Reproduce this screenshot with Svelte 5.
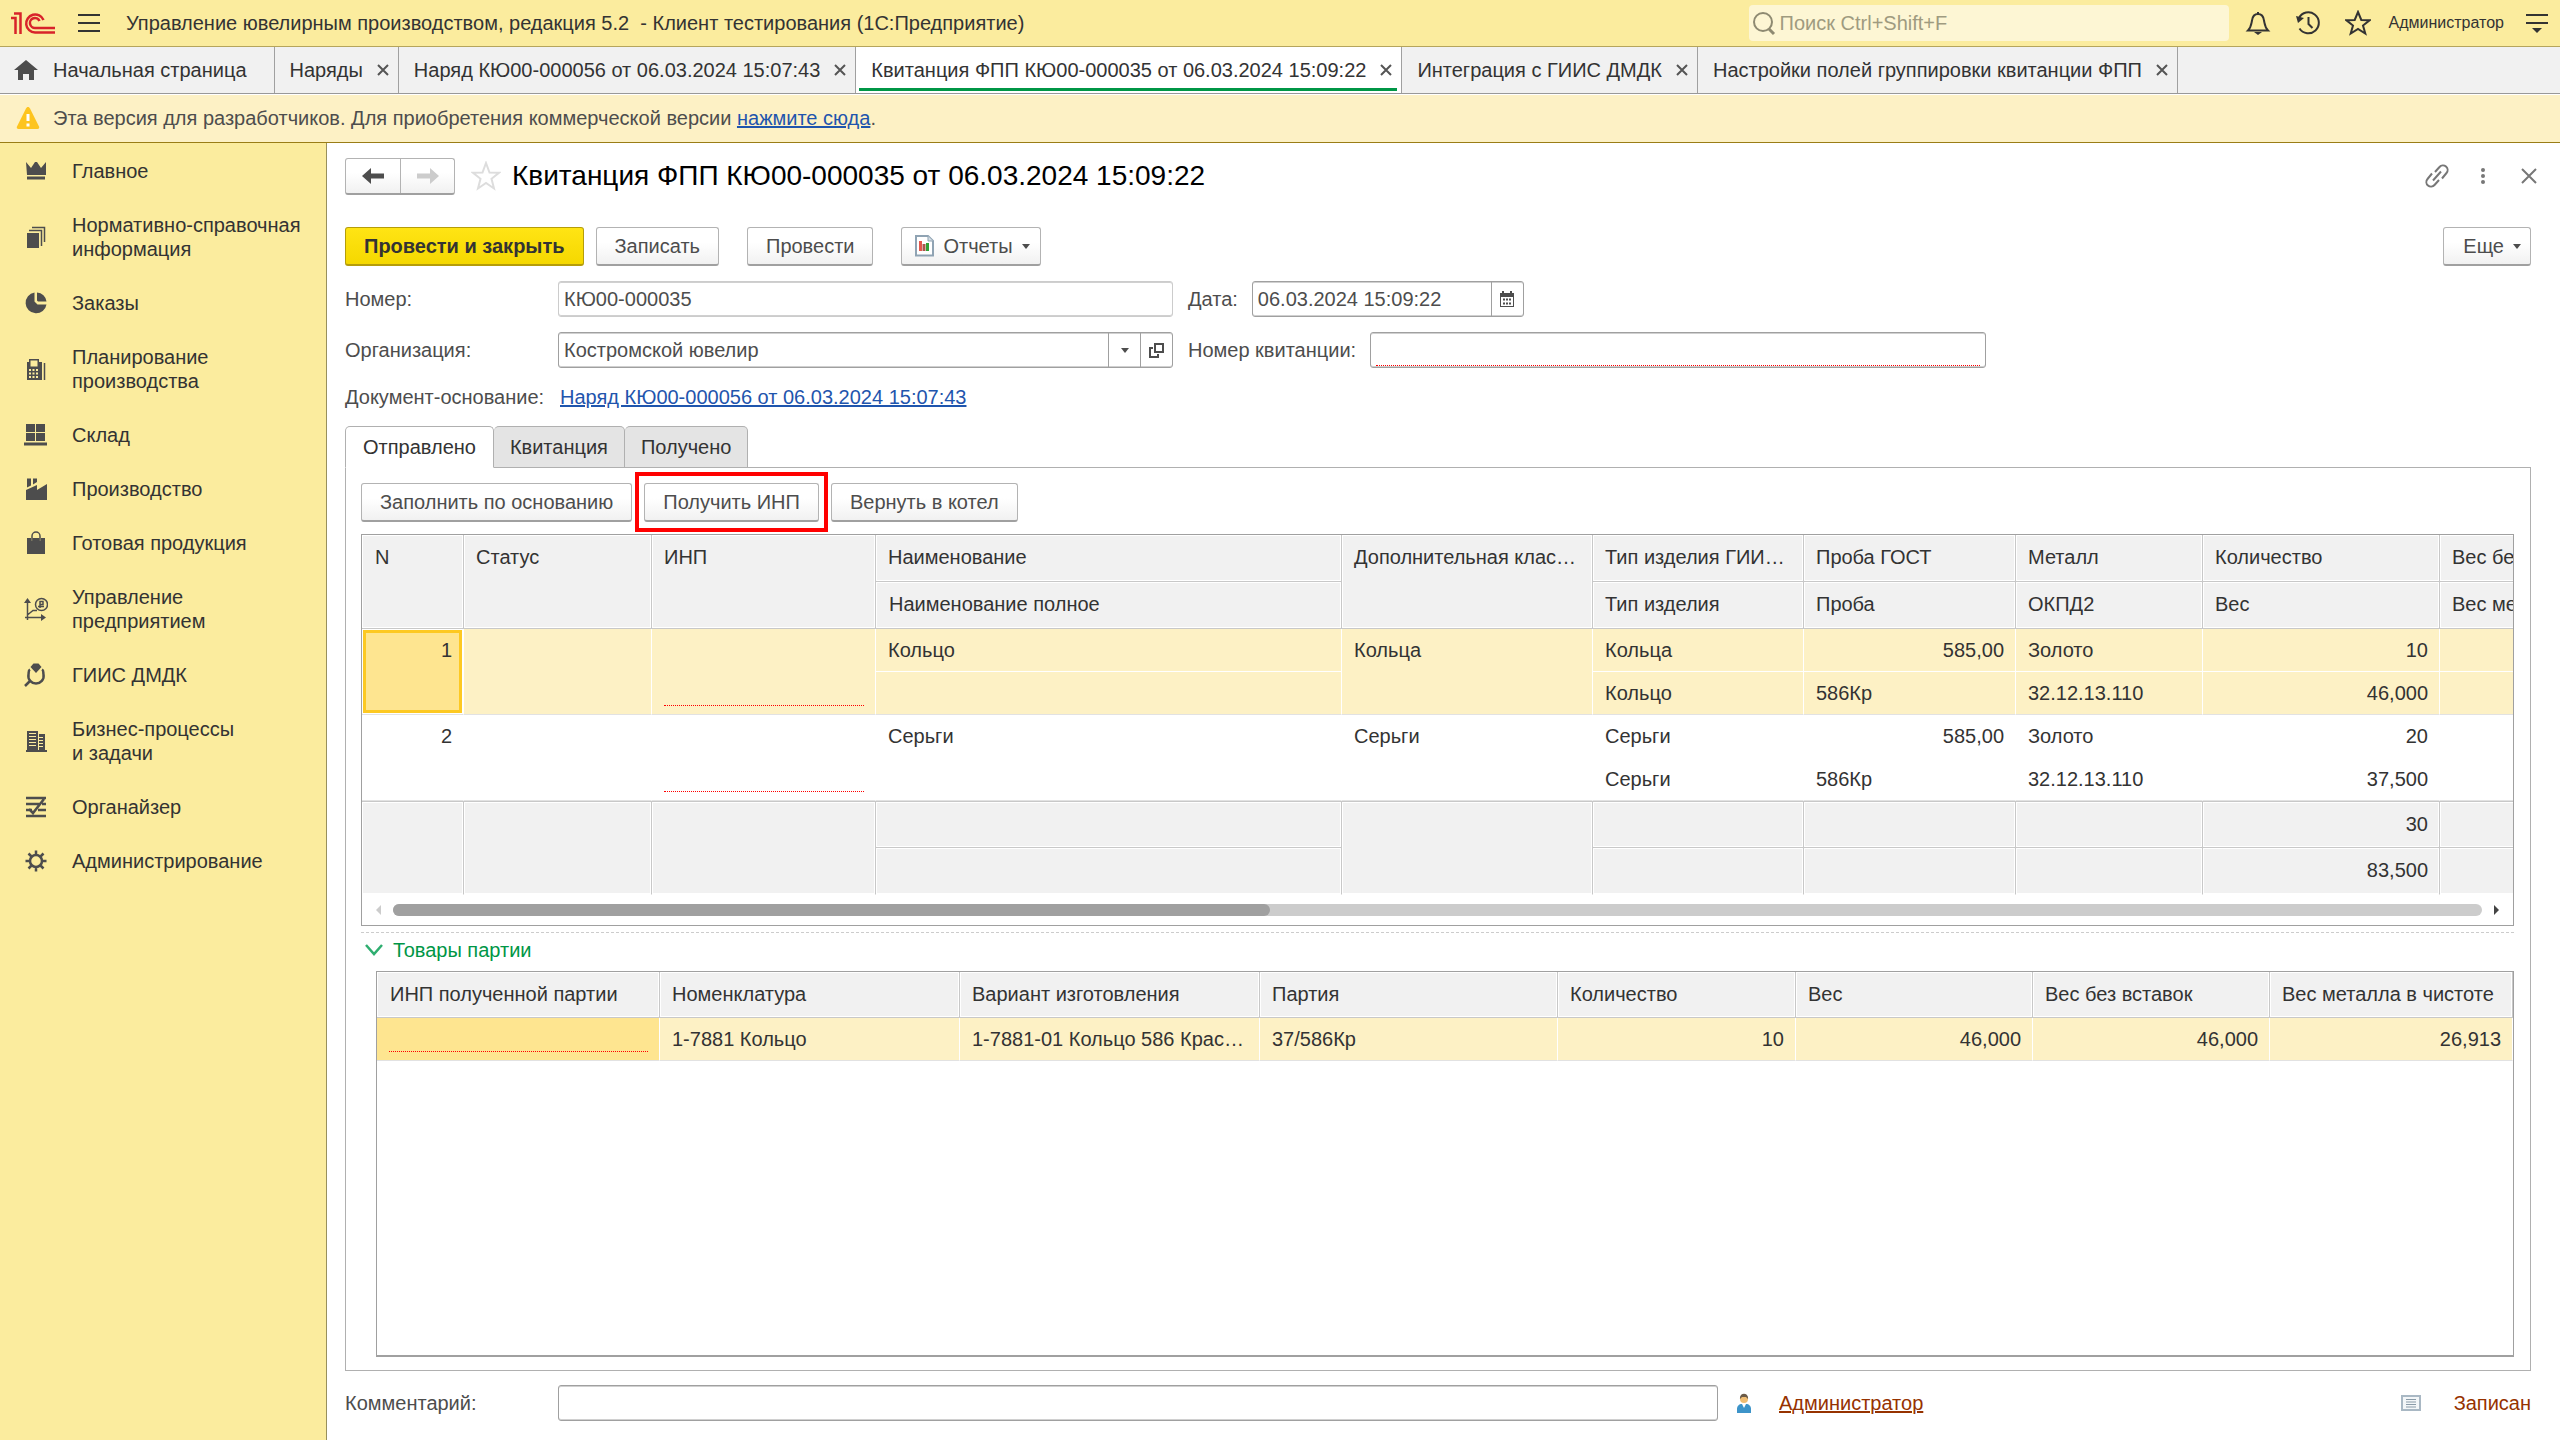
<script>
    let windows = [
        { title: "Наряды" },
        { title: "Наряд КЮ00-000056 от 06.03.2024 15:07:43" },
        { title: "Квитанция ФПП КЮ00-000035 от 06.03.2024 15:09:22", active: true },
        { title: "Интеграция с ГИИС ДМДК" },
        { title: "Настройки полей группировки квитанции ФПП" },
    ];

    // fill - solid shapes, line and bold - strokes, all on a 24x24 grid
    let sections = [
        {
            name: "Главное",
            fill: "M2 3l5 6 4-6h2l4 6 5-6v13H3zM3 17.500h18v3H3z",
        },
        {
            name: "Нормативно-справочная информация",
            fill: "M3 8h12v15H3z",
            line: "M5 5.500h12.500V21M8 2.500h12.500V17",
        },
        {
            name: "Заказы",
            fill: "M10.500 1.500A10.500 10.500 0 1 0 22.500 13.500h-9l-3-3zM13 1.500A10 10 0 0 1 22.500 10.500H14l-1-1z",
        },
        {
            name: "Планирование производства",
            fill: "M3 5h2V2h10v3h3v18H3zM6.500 3.500v6h7v-6zM5 12v2h2v-2zM8.500 12v2h2v-2zM12 12v2h2v-2zM5 15.500v2h2v-2zM8.500 15.500v2h2v-2zM12 15.500v2h2v-2zM5 19v2h2v-2zM8.500 19v2h2v-2zM12 19v2h2v-2z",
            line: "M20.500 6v17",
        },
        {
            name: "Склад",
            fill: "M2 1h9v8H2zM12 1h9v8h-9zM2 10h9v8H2zM12 10h9v8h-9zM0 19.500h23v3H0z",
        },
        {
            name: "Производство",
            fill: "M3 1.500h4v7l-4 2zM9 1.500h4V5l-4 2.500zM2 13l11-5v5l10-6v16H2z",
        },
        {
            name: "Готовая продукция",
            fill: "M3 7h4v3h1.500V7h7v3H17V7h4v16H3z",
            line: "M8 10V5a4 4 0 0 1 8 0v5",
        },
        {
            name: "Управление предприятием",
            fill: "M0 6l3.500-5L7 6zM17 17l5 3.500-5 3.500z",
            line: "M3.500 4v19M1 20.500h18M4 17.500l5-4h4M17.500 1.500a6 6 0 1 1 0 12 6 6 0 0 1 0-12zM16 11V4.500h3v3h-3M14 9.500h6",
        },
        {
            name: "ГИИС ДМДК",
            fill: "M6.500 4l3-3.500h5l3 3.500-5.500 6z",
            bold: "M6 6.500c-2 1-1 3-1.500 5-1 5 3 9 7.500 9s8.500-4 7.500-9c-.5-2 .5-4-1.500-5M5.500 18.500L1 23",
        },
        {
            name: "Бизнес-процессы и\u00a0задачи",
            fill: "M3 2h11v19H3zM5 4v1h7V4zM5 7v1h7V7zM5 10v1h7v-1zM5 13v1h7v-1zM5 16v1h7v-1zM15 5h6v16h-6zM15 8v1h4V8zM15 11v1h4v-1zM15 14v1h4v-1zM15 17v1h4v-1zM2 21h21v2H2z",
        },
        {
            name: "Органайзер",
            bold: "M2 3h20M2 9h14M18 9h4M2 15h6M14 15h8M2 21h20M5 14l4 4L20 4",
        },
        {
            name: "Администрирование",
            bold: "M12 6a6 6 0 1 1 0 12 6 6 0 0 1 0-12zM12 1.500v4M12 18.500v4M1.500 12h4M18.500 12h4M4.500 4.500l3 3M16.500 16.500l3 3M19.500 4.500l-3 3M7.500 16.500l-3 3",
        },
    ];

    let tabs = ["Отправлено", "Квитанция", "Получено"];
    let current = "Отправлено";

    let widths = [102, 188, 224, 466, 251, 211, 212, 187, 237, 237];

    let columns = [
        ["N"],
        ["Статус"],
        ["ИНП"],
        ["Наименование", "Наименование полное"],
        ["Дополнительная классификация"],
        ["Тип изделия ГИИС ДМДК", "Тип изделия"],
        ["Проба ГОСТ", "Проба"],
        ["Металл", "ОКПД2"],
        ["Количество", "Вес"],
        ["Вес без вставок", "Вес металла в чистоте"],
    ];

    let products = [
        { n: 1, name: "Кольцо", group: "Кольца", kind: "Кольца", type: "Кольцо", gost: "585,00", alloy: "586Кр", metal: "Золото", okpd: "32.12.13.110", count: 10, weight: "46,000" },
        { n: 2, name: "Серьги", group: "Серьги", kind: "Серьги", type: "Серьги", gost: "585,00", alloy: "586Кр", metal: "Золото", okpd: "32.12.13.110", count: 20, weight: "37,500" },
    ];

    let partWidths = [283, 300, 300, 298, 238, 237, 237];
    let partColumns = [
        "ИНП полученной партии",
        "Номенклатура",
        "Вариант изготовления",
        "Партия",
        "Количество",
        "Вес",
        "Вес без вставок",
        "Вес металла в чистоте",
    ];
</script>

<div class="app">
    <header class="top">
        <svg class="logo" width="46" height="24" viewBox="0 0 46 24">
            <path d="M1 7h4.500v16M4 2.500h6.500V23" />
            <path d="M33.500 9A9 9 0 1 0 25 21.500h20M29.500 10a5 5 0 1 0-4 7h19.500" />
        </svg>
        <button class="icon burger" aria-label="Меню">
            <svg width="22" height="20" viewBox="0 0 22 20"><path d="M0 2h22M0 10h22M0 18h22" /></svg>
        </button>
        <span class="app-name">Управление ювелирным производством, редакция 5.2 &nbsp;- Клиент тестирования (1С:Предприятие)</span>
        <label class="search">
            <svg width="26" height="26" viewBox="0 0 26 26">
                <circle cx="11" cy="12" r="9" />
                <path d="M17 19l5 5" stroke-width="3" />
            </svg>
            <input type="search" placeholder="Поиск Ctrl+Shift+F" aria-label="Поиск" />
        </label>
        <button class="icon" aria-label="Уведомления">
            <svg width="26" height="26" viewBox="0 0 26 26">
                <path d="M3 20.500c3-3 3-5 4-10 .5-4 3-6.500 6-6.500s5.500 2.500 6 6.500c1 5 1 7 4 10zM13 2v2" />
                <path class="solid" d="M9 22h8l-4 3z" />
            </svg>
        </button>
        <button class="icon" aria-label="История">
            <svg width="26" height="26" viewBox="0 0 26 26">
                <path d="M4 8A10.500 10.500 0 1 1 4.500 18.500M13.500 7v7l4 4" />
                <path class="solid" d="M1 6l8 2-6 5z" />
            </svg>
        </button>
        <button class="icon" aria-label="Избранное">
            <svg width="26" height="26" viewBox="0 0 26 26">
                <path d="M13 2l3.300 8 8.200.3-6.500 5.200 2.300 8L13 19l-7.300 4.500 2.300-8L1.500 10.300l8.200-.3z" />
            </svg>
        </button>
        <a class="account" href="#user">Администратор</a>
        <button class="icon" aria-label="Настройки">
            <svg width="22" height="22" viewBox="0 0 22 22">
                <path d="M0 3h22M0 11h22" />
                <path class="solid" d="M6 16h10l-5 5z" />
            </svg>
        </button>
    </header>

    <nav class="windows">
        <a class="home" href="#home">
            <svg width="24" height="20" viewBox="0 0 24 20"><path d="M12 0l12 10h-4v10h-5v-6H9v6H4V10H0z" /></svg>
            Начальная страница
        </a>
        {#each windows as w}
            <div class="window" class:active={w.active}>
                <a href="#window">{w.title}</a>
                <button class="icon" aria-label="Закрыть">
                    <svg width="12" height="12" viewBox="0 0 12 12"><path d="M1 1l10 10M11 1L1 11" /></svg>
                </button>
            </div>
        {/each}
    </nav>

    <div class="notice">
        <svg width="24" height="22" viewBox="0 0 24 22">
            <path d="M12 0c1 0 1.500.6 2 1.500l9 18c.6 1.500 0 2.500-1.500 2.500h-19C1 22 .4 21 1 19.500l9-18C10.500.6 11 0 12 0z" fill="#fdc41f" />
            <path d="M12 7v7M12 16.500v3" stroke="#fff" stroke-width="3" />
        </svg>
        <span>Эта версия для разработчиков. Для приобретения коммерческой версии <a href="#buy">нажмите сюда</a>.</span>
    </div>

    <div class="body">
        <nav class="sections">
            {#each sections as s}
                <a href="#section">
                    <svg width="24" height="24" viewBox="0 0 24 24">
                        {#if s.line}<path d={s.line} class="line" />{/if}
                        {#if s.bold}<path d={s.bold} class="line bold" />{/if}
                        {#if s.fill}<path d={s.fill} fill-rule="evenodd" />{/if}
                    </svg>
                    <span>{s.name}</span>
                </a>
            {/each}
        </nav>

        <main>
            <div class="title">
                <div class="history">
                    <button aria-label="Назад">
                        <svg width="22" height="16" viewBox="0 0 22 16"><path d="M0 8l9-8v5.500h13v5H9V16z" /></svg>
                    </button>
                    <button aria-label="Вперед" disabled>
                        <svg width="22" height="16" viewBox="0 0 22 16"><path d="M22 8l-9-8v5.500H0v5h13V16z" /></svg>
                    </button>
                </div>
                <button class="icon favorite" aria-label="В избранное">
                    <svg width="30" height="30" viewBox="0 0 30 30">
                        <path d="M15 2l3.500 9.500 9.500.3-7.500 6 2.500 9.700-8-5.500-8 5.500 2.500-9.700-7.500-6 9.500-.3z" />
                    </svg>
                </button>
                <h1>Квитанция ФПП КЮ00-000035 от 06.03.2024 15:09:22</h1>
                <div class="tools">
                    <button class="icon" aria-label="Ссылка">
                        <svg width="24" height="24" viewBox="0 0 24 24">
                            <path d="M10 8l4.500-5a4.500 4.500 0 0 1 7 6L17 14.500M14 16l-4.500 5a4.500 4.500 0 0 1-7-6L7 9.500M8 16.500l8-9" />
                        </svg>
                    </button>
                    <button class="icon" aria-label="Дополнительно">
                        <svg width="6" height="18" viewBox="0 0 6 18">
                            <circle class="solid" cx="3" cy="3" r="2" />
                            <circle class="solid" cx="3" cy="9" r="2" />
                            <circle class="solid" cx="3" cy="15" r="2" />
                        </svg>
                    </button>
                    <button class="icon" aria-label="Закрыть форму">
                        <svg width="16" height="16" viewBox="0 0 16 16"><path d="M1 1l14 14M15 1L1 15" /></svg>
                    </button>
                </div>
            </div>

            <div class="commands">
                <button class="btn primary">Провести и закрыть</button>
                <button class="btn">Записать</button>
                <button class="btn apart">Провести</button>
                <button class="btn apart reports">
                    <svg width="20" height="22" viewBox="0 0 20 22">
                        <path d="M2 1h12l5 5v14.500H2z" fill="#fff" stroke="#8fa3b3" stroke-width="2" />
                        <path d="M14 1v5h5" fill="#d5dee5" stroke="#8fa3b3" />
                        <path d="M5 6h3v10H5z" fill="#e2574c" />
                        <path d="M8.500 9h3v7h-3z" fill="#a8574c" />
                        <path d="M12 8h3v8h-3z" fill="#2fa136" />
                    </svg>
                    Отчеты
                    <i class="arrow"></i>
                </button>
                <button class="btn more">Еще <i class="arrow"></i></button>
            </div>

            <div class="fields">
                <label for="number">Номер:</label>
                <input id="number" class="field disabled" value="КЮ00-000035" readonly />
                <div class="side">
                    <label for="date">Дата:</label>
                    <div class="field date">
                        <input id="date" value="06.03.2024 15:09:22" />
                        <button aria-label="Календарь">
                            <svg width="14" height="16" viewBox="0 0 14 16">
                                <path d="M0 2h2V0h2v2h6V0h2v2h2v14H0zM1 6v9h12V6z" fill-rule="evenodd" />
                                <path d="M3 7.500h2v2H3zM6 7.500h2v2H6zM9 7.500h2v2H9zM3 11.500h2v2H3zM6 11.500h2v2H6zM9 11.500h2v2H9z" />
                            </svg>
                        </button>
                    </div>
                </div>

                <label for="org">Организация:</label>
                <div class="field">
                    <select id="org">
                        <option>Костромской ювелир</option>
                    </select>
                    <span class="drop"><i class="arrow"></i></span>
                    <button aria-label="Открыть">
                        <svg width="15" height="15" viewBox="0 0 15 15">
                            <path d="M6 1h8v8H6zM4 5H1v9h8v-3" fill="none" stroke="#4d4d4d" stroke-width="2" />
                        </svg>
                    </button>
                </div>
                <div class="side">
                    <label for="receipt">Номер квитанции:</label>
                    <div class="field receipt">
                        <input id="receipt" />
                    </div>
                </div>
            </div>

            <div class="basis">
                <span>Документ-основание:</span>
                <a href="#order">Наряд КЮ00-000056 от 06.03.2024 15:07:43</a>
            </div>

            <div class="tabs" role="tablist">
                {#each tabs as tab}
                    <button role="tab" aria-selected={tab == current} class:current={tab == current} on:click={() => (current = tab)}>{tab}</button>
                {/each}
            </div>

            <section class="panel">
                <div class="commands">
                    <button class="btn">Заполнить по основанию</button>
                    <button class="btn marked">Получить ИНП</button>
                    <button class="btn">Вернуть в котел</button>
                </div>

                <div class="grid">
                    <div class="clip">
                        <table class="products">
                            <colgroup>
                                {#each widths as w}
                                    <col style="width: {w}px" />
                                {/each}
                            </colgroup>
                            <thead>
                                <tr>
                                    {#each columns as c}
                                        <th rowspan={c.length == 1 ? 2 : 1}>{c[0]}</th>
                                    {/each}
                                </tr>
                                <tr>
                                    {#each columns.filter((c) => c[1]) as c}
                                        <th>{c[1]}</th>
                                    {/each}
                                </tr>
                            </thead>
                            {#each products as p, i}
                                <tbody class:selected={i == 0}>
                                    <tr>
                                        <td rowspan="2" class="num" class:cursor={i == 0}>{p.n}</td>
                                        <td rowspan="2"></td>
                                        <td rowspan="2" class="empty"><span></span></td>
                                        <td>{p.name}</td>
                                        <td rowspan="2">{p.group}</td>
                                        <td>{p.kind}</td>
                                        <td class="num">{p.gost}</td>
                                        <td>{p.metal}</td>
                                        <td class="num">{p.count}</td>
                                        <td></td>
                                    </tr>
                                    <tr>
                                        <td></td>
                                        <td>{p.type}</td>
                                        <td>{p.alloy}</td>
                                        <td>{p.okpd}</td>
                                        <td class="num">{p.weight}</td>
                                        <td></td>
                                    </tr>
                                </tbody>
                            {/each}
                            <tfoot>
                                <tr>
                                    {#each columns as c, i}
                                        <td class="num" rowspan={c.length == 1 ? 2 : 1}>{i == 8 ? "30" : ""}</td>
                                    {/each}
                                </tr>
                                <tr>
                                    {#each columns.filter((c) => c[1]) as c}
                                        <td class="num">{c[1] == "Вес" ? "83,500" : ""}</td>
                                    {/each}
                                </tr>
                            </tfoot>
                        </table>
                    </div>
                    <div class="scroll">
                        <i class="left"></i>
                        <div class="track"><div class="thumb"></div></div>
                        <i class="right"></i>
                    </div>
                </div>

                <div class="splitter"></div>

                <button class="group">
                    <svg width="20" height="12" viewBox="0 0 20 12"><path d="M2 1l8 9 8-9" /></svg>
                    Товары партии
                </button>

                <div class="grid parts">
                    <table>
                        <colgroup>
                            {#each partWidths as w}
                                <col style="width: {w}px" />
                            {/each}
                            <col />
                        </colgroup>
                        <thead>
                            <tr>
                                {#each partColumns as c}
                                    <th>{c}</th>
                                {/each}
                            </tr>
                        </thead>
                        <tbody class="selected">
                            <tr>
                                <td class="empty cell"><span></span></td>
                                <td>1-7881 Кольцо</td>
                                <td>1-7881-01 Кольцо 586 Красное золото</td>
                                <td>37/586Кр</td>
                                <td class="num">10</td>
                                <td class="num">46,000</td>
                                <td class="num">46,000</td>
                                <td class="num">26,913</td>
                            </tr>
                        </tbody>
                    </table>
                </div>
            </section>

            <footer>
                <label for="comment">Комментарий:</label>
                <input id="comment" class="field" />
                <svg class="person" width="16" height="20" viewBox="0 0 16 20">
                    <path d="M1 20v-4c0-3 2-5 5-5h4c3 0 5 2 5 5v4z" fill="#3d94c9" />
                    <path d="M6 11h4l-2 4z" fill="#fff" />
                    <circle cx="8" cy="6" r="4" fill="#f0bd72" />
                    <path d="M4 6c-1-7 9-7 8 0l-2-2H6z" fill="#6b5a47" />
                </svg>
                <a href="#author">Администратор</a>
                <span class="state">
                    <svg width="20" height="16" viewBox="0 0 20 16">
                        <path d="M1 1h18v14H1z" fill="#f3f6f8" stroke="#a9b8c4" stroke-width="2" />
                        <path d="M5 4.500h10M5 7h10M5 9.500h10M5 12h10" stroke="#8a9ba8" />
                    </svg>
                    Записан
                </span>
            </footer>
        </main>
    </div>
</div>

<style>
    :global(body) {
        margin: 0;
        background: #fff;
    }

    * {
        box-sizing: border-box;
    }

    .app {
        min-height: 100vh;
        display: flex;
        flex-direction: column;
        font: 20px/24px "Liberation Sans", Arial, sans-serif;
        color: #333;
    }

    button,
    input,
    select {
        font: inherit;
        color: inherit;
        margin: 0;
    }

    .icon {
        display: flex;
        padding: 0;
        border: none;
        background: none;
    }

    .icon svg {
        fill: none;
        stroke: #333;
        stroke-width: 2;
    }

    .icon .solid {
        fill: #333;
        stroke: none;
    }

    /* top bar */
    .top {
        display: flex;
        align-items: center;
        height: 47px;
        padding: 0 12px 0 10px;
        background: #fbec9e;
        border-bottom: 1px solid #b5a55c;
    }

    .logo {
        fill: none;
        stroke: #d8232a;
        stroke-width: 2.5;
    }

    .burger {
        margin: 0 26px 0 22px;
    }

    .app-name {
        flex: 1;
    }

    .search {
        display: flex;
        align-items: center;
        gap: 2px;
        width: 480px;
        height: 36px;
        padding-left: 3px;
        margin-right: 16px;
        border-radius: 4px;
        background: #fdf6d4;
    }

    .search svg {
        fill: none;
        stroke: #8e8a72;
        stroke-width: 2;
    }

    .search input {
        flex: 1;
        padding: 0;
        border: none;
        outline: none;
        background: none;
    }

    .search input::placeholder {
        color: #9f9b80;
        opacity: 1;
    }

    .search ~ .icon {
        margin-right: 24px;
    }

    .account {
        margin: 0 22px 0 -6px;
        font-size: 16px;
        color: inherit;
        text-decoration: none;
    }

    .top > .icon:last-child {
        margin-right: 0;
    }

    /* open windows */
    .windows {
        display: flex;
        height: 47px;
        background: #f1f1f1;
        border-bottom: 1px solid #999;
    }

    .windows a {
        color: inherit;
        text-decoration: none;
    }

    .home {
        display: flex;
        align-items: center;
        gap: 15px;
        padding: 0 27px 0 14px;
        border-right: 1px solid #a0a0a0;
    }

    .home svg {
        fill: #4d4d4d;
    }

    .window {
        position: relative;
        display: flex;
        align-items: center;
        gap: 14px;
        padding: 0 9px 0 15px;
        border-right: 1px solid #a0a0a0;
    }

    .window .icon svg {
        stroke: #555;
    }

    .active {
        background: #fff;
    }

    .active::after {
        content: "";
        position: absolute;
        left: 3px;
        right: 4px;
        bottom: 2px;
        height: 3px;
        background: #009646;
    }

    .notice {
        display: flex;
        align-items: center;
        gap: 13px;
        height: 49px;
        padding: 0 16px 2px;
        color: #4d4d4d;
        background: #fdf1c5;
        border-top: 1px solid #fff;
        border-bottom: 1px solid #9a7d16;
    }

    .notice a,
    .basis a {
        color: #1f55ad;
    }

    .body {
        flex: 1;
        display: flex;
    }

    /* sections */
    .sections {
        width: 327px;
        flex-shrink: 0;
        padding-top: 1px;
        background: #fbec9e;
        border-right: 1px solid #98905c;
    }

    .sections a {
        display: flex;
        align-items: center;
        gap: 24px;
        padding: 15px 20px 15px 24px;
        color: inherit;
        text-decoration: none;
    }

    .sections svg {
        flex-shrink: 0;
        fill: #4d4d4d;
    }

    .sections .line {
        fill: none;
        stroke: #4d4d4d;
        stroke-width: 1.5;
    }

    .sections .bold {
        stroke-width: 2.5;
    }

    /* document form */
    main {
        flex: 1;
        min-width: 0;
        display: flex;
        flex-direction: column;
        padding: 15px 29px 19px 18px;
        color: #4d4d4d;
    }

    .title {
        display: flex;
        align-items: center;
        height: 36px;
        margin-bottom: 33px;
    }

    .history {
        display: flex;
        height: 37px;
        border: 1px solid #b3b3b3;
        border-bottom: 2px solid #a0a0a0;
        border-radius: 3px;
        background: linear-gradient(#fff 40%, #f1f1f1);
    }

    .history button {
        display: flex;
        align-items: center;
        justify-content: center;
        width: 54px;
        padding: 0;
        border: none;
        background: none;
    }

    .history button + button {
        border-left: 1px solid #b3b3b3;
    }

    .history svg {
        fill: #4d4d4d;
    }

    .history button:disabled svg {
        fill: #ccc;
    }

    .favorite {
        margin: 0 11px 0 16px;
    }

    .favorite svg {
        stroke: #ddd;
    }

    h1 {
        flex: 1;
        margin: 0;
        font-size: 28px;
        font-weight: normal;
        color: #000;
    }

    .tools {
        display: flex;
        align-items: center;
        gap: 22px;
        margin-right: -10px;
    }

    .tools .icon {
        justify-content: center;
        width: 24px;
    }

    .tools svg {
        stroke: #777;
    }

    .tools .solid {
        fill: #777;
    }

    .commands {
        display: flex;
        gap: 12px;
        margin-bottom: 15px;
    }

    .btn {
        display: flex;
        align-items: center;
        justify-content: center;
        gap: 9px;
        height: 39px;
        padding: 0 18px;
        border: 1px solid #b3b3b3;
        border-bottom: 2px solid #a0a0a0;
        border-radius: 3px;
        background: linear-gradient(#fff 40%, #f1f1f1);
    }

    .primary {
        font-weight: bold;
        color: #333;
        border-color: #b59d0a;
        background: linear-gradient(#ffe414, #f5d800);
    }

    .apart {
        margin-left: 16px;
    }

    .reports {
        padding: 0 10px 0 12px;
    }

    .more {
        margin-left: auto;
        padding: 0 9px 0 19px;
    }

    .arrow {
        border: 4px solid transparent;
        border-top: 5px solid #4d4d4d;
        border-bottom: none;
    }

    .fields {
        display: grid;
        grid-template-columns: 213px 615px 1fr;
        gap: 15px 0;
        align-items: center;
    }

    .field {
        display: flex;
        height: 36px;
        padding: 0;
        border: 1px solid #a0a0a0;
        border-radius: 3px;
        background: #fff;
        box-shadow: inset 0 1px #d0d0d0, inset 0 -1px #d0d0d0;
    }

    input.field {
        padding: 0 5px;
    }

    .disabled {
        border-color: #ccc;
    }

    .field input,
    .field select {
        flex: 1;
        min-width: 0;
        padding: 0 5px;
        border: none;
        outline: none;
        appearance: none;
        background: none;
    }

    .field button,
    .drop {
        display: flex;
        align-items: center;
        justify-content: center;
        width: 32px;
        padding: 0;
        border: none;
        border-left: 1px solid #a0a0a0;
        background: none;
    }

    .field svg {
        fill: #4d4d4d;
    }

    .side {
        display: flex;
        align-items: center;
        gap: 14px;
        padding-left: 15px;
    }

    .date {
        width: 272px;
    }

    .receipt {
        width: 616px;
    }

    .receipt input {
        margin: 0 5px 1px;
        border-bottom: 1px dotted #f00;
    }

    .basis {
        display: grid;
        grid-template-columns: 215px 1fr;
        margin: 17px 0;
    }

    .tabs {
        display: flex;
        height: 42px;
        margin-bottom: -1px;
        z-index: 1;
    }

    .tabs button {
        padding: 0 16px;
        color: #333;
        border: 1px solid #b0b0b0;
        border-left: none;
        border-radius: 5px 5px 0 0;
        background: #e4e4e4;
    }

    .tabs .current {
        padding: 0 17px;
        border-left: 1px solid #b0b0b0;
        border-bottom-color: #fff;
        background: #fff;
    }

    .panel {
        flex: 1;
        display: flex;
        flex-direction: column;
        padding: 15px 16px 13px 15px;
        border: 1px solid #b0b0b0;
    }

    .panel .commands {
        margin-bottom: 12px;
    }

    .marked {
        position: relative;
    }

    .marked::after {
        content: "";
        position: absolute;
        inset: -12px -10px;
        border: 4px solid #f00;
    }

    /* tables */
    .grid {
        color: #333;
        border: 1px solid #a0a0a0;
    }

    .clip {
        overflow: hidden;
    }

    table {
        width: 100%;
        table-layout: fixed;
        border-spacing: 0;
    }

    .products {
        width: 2315px;
    }

    th,
    td {
        overflow: hidden;
        height: 43px;
        padding: 0 11px 0 12px;
        font-weight: normal;
        line-height: 42px;
        text-align: left;
        text-overflow: ellipsis;
        white-space: nowrap;
        vertical-align: top;
        border-right: 1px solid #fff;
        border-bottom: 1px solid #fff;
    }

    th:first-child {
        padding-left: 13px;
    }

    th,
    tfoot td {
        height: 47px;
        line-height: 45px;
        background: #f1f1f1;
        border-color: #c8c8c8;
        box-shadow: inset 0 0 0 1px #fff;
    }

    .parts th {
        height: 46px;
    }

    .num {
        text-align: right;
    }

    tbody tr:last-child td,
    tbody td[rowspan] {
        border-bottom-color: #e2e2e2;
    }

    tfoot tr:first-child td {
        border-top: 1px solid #c8c8c8;
    }

    tfoot tr:last-child td,
    tfoot td[rowspan="2"] {
        border-bottom-color: #fff;
    }

    .selected td {
        background: #fdf1c5;
    }

    .selected .cursor {
        background: #fee590;
        box-shadow: inset 0 0 0 1px #fff, inset 0 0 0 4px #fdc922;
    }

    .selected .cell {
        background: #fee590;
    }

    .empty {
        vertical-align: bottom;
    }

    .empty span {
        display: block;
        margin-bottom: 8px;
        border-bottom: 1px dotted #f00;
    }

    .scroll {
        display: flex;
        align-items: center;
        gap: 12px;
        height: 30px;
        padding: 0 14px;
    }

    .left,
    .right {
        border: solid transparent;
        border-width: 5px 0;
    }

    .left {
        border-right: 5px solid #ccc;
    }

    .right {
        border-left: 5px solid #444;
    }

    .track {
        flex: 1;
        height: 12px;
        border-radius: 6px;
        background: #ccc;
    }

    .thumb {
        width: 42%;
        height: 100%;
        border-radius: 6px;
        background: #a0a0a0;
    }

    .splitter {
        margin-top: 6px;
        border-top: 1px dashed #ccc;
    }

    .group {
        display: flex;
        align-items: center;
        gap: 9px;
        align-self: flex-start;
        margin: 5px 0 9px 3px;
        padding: 0;
        color: #009646;
        border: none;
        background: none;
    }

    .group svg {
        fill: none;
        stroke: #2fae70;
        stroke-width: 2.5;
    }

    .parts {
        flex: 1;
        margin-left: 15px;
        border-bottom-width: 2px;
    }

    footer {
        display: grid;
        grid-template-columns: 213px 1160px auto auto 1fr;
        align-items: center;
        margin-top: 14px;
    }

    footer a {
        color: #963200;
    }

    .person {
        margin: 0 27px 0 18px;
    }

    .state {
        display: flex;
        align-items: center;
        justify-content: flex-end;
        gap: 33px;
        color: #963200;
    }
</style>
